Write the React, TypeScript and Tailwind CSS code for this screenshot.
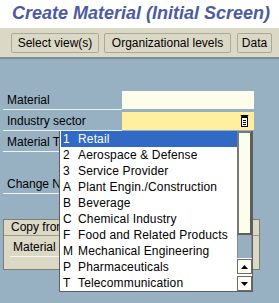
import React from 'react';

type Sector = { code: string; name: string };

const sectors: Sector[] = [
  { code: '1', name: 'Retail' },
  { code: '2', name: 'Aerospace & Defense' },
  { code: '3', name: 'Service Provider' },
  { code: 'A', name: 'Plant Engin./Construction' },
  { code: 'B', name: 'Beverage' },
  { code: 'C', name: 'Chemical Industry' },
  { code: 'F', name: 'Food and Related Products' },
  { code: 'M', name: 'Mechanical Engineering' },
  { code: 'P', name: 'Pharmaceuticals' },
  { code: 'T', name: 'Telecommunication' },
];

function HelpIcon() {
  return (
    <svg width="9" height="12" viewBox="0 0 9 12">
      <path d="M0.5 0h8l-1.5 3h-5z" fill="#000" />
      <rect x="1.5" y="2.5" width="6" height="9" fill="#fff" stroke="#000" />
      <path d="M3 5.5h3M3 7.5h3M3 9.5h3" stroke="#000" />
    </svg>
  );
}

function Arrow({ up }: { up?: boolean }) {
  return (
    <svg width="7" height="4" viewBox="0 0 7 4">
      <path d={up ? 'M0 4h7L3.5 0z' : 'M0 0h7L3.5 4z'} fill="#000" />
    </svg>
  );
}

// labels under the popup get clipped where the list starts
function Label({ text, clip }: { text: string; clip?: boolean }) {
  return (
    <div className="w-[119px] h-[19px] border-b border-[#eef3f6] pl-[4px] leading-[18px] whitespace-nowrap overflow-hidden">
      <span className={clip ? 'block w-[52px] overflow-hidden' : ''}>{text}</span>
    </div>
  );
}

export default function App() {
  return (
    <div className="w-[279px] h-[303px] overflow-hidden bg-[#98b1c2] text-[12px] text-black font-['Liberation_Sans',Arial,sans-serif]">
      {/* title */}
      <div className="h-[28px] bg-white pl-[12px] pt-[3px] text-[18px] leading-[21px] font-bold italic text-[#4c5ba1] whitespace-nowrap">
        Create Material (Initial Screen)
      </div>

      {/* toolbar */}
      <div className="h-[29px] bg-[#dbd8c6] flex items-start gap-[5px] pl-[11px] pt-[5px] whitespace-nowrap">
        <button className="w-[88px] h-[20px] border border-[#aaa898] rounded-[2px] leading-[18px] text-center">Select view(s)</button>
        <button className="w-[127px] h-[20px] border border-[#aaa898] rounded-[2px] leading-[18px] text-center">Organizational levels</button>
        <button className="w-[35px] h-[20px] ml-[1px] border border-[#aaa898] rounded-[2px] leading-[18px] text-center">Data</button>
      </div>
      <div className="h-[2px] bg-[#7a8d9b]" />

      {/* form */}
      <div className="relative pt-[32px]">
        <div className="flex flex-col gap-[2px] ml-[3px]">
          <div className="flex items-start">
            <Label text="Material" />
            <div className="w-[132px] h-[18px] bg-[#fdfdeb]" />
          </div>
          <div className="flex items-start">
            <Label text="Industry sector" />
            <div className="w-[132px] h-[18px] bg-[#ffef9f] flex items-center justify-end pr-[5px]">
              <HelpIcon />
            </div>
          </div>
          <div className="flex items-start">
            <Label text="Material Type" clip />
          </div>
          <div className="h-[19px]" />
          <div className="flex items-start">
            <Label text="Change Number" clip />
          </div>
        </div>

        {/* copy from */}
        <div className="mt-[25px] ml-[3px] w-[257px] h-[51px] bg-[#dbd8c6] border border-[#7e7d72]">
          <div className="h-[16px] border-b border-[#9c9a8b] pl-[7px] leading-[15px] whitespace-nowrap">
            <span className="block w-[48px] overflow-hidden">Copy from</span>
          </div>
          <div className="pt-[2px] pl-[6px]">
            <div className="w-[50px] h-[19px] border-b border-[#f6f5ee] pl-[3px] leading-[18px] overflow-hidden">Material</div>
          </div>
        </div>

        {/* dropdown list */}
        <div className="absolute left-[59px] top-[72px] w-[194px] h-[161px] bg-white border border-t-0 border-[#5f5f5f] flex pl-[1px]">
          <div className="w-[176px] tracking-[0.15px]">
            {sectors.map((s, i) => (
              <div
                key={s.code}
                className={
                  'h-[16px] leading-[16px] flex pl-[2px] whitespace-nowrap ' +
                  (i === 0 ? 'bg-[#316ac5] text-white' : '')
                }
              >
                <span className="w-[15px]">{s.code}</span>
                <span>{s.name}</span>
              </div>
            ))}
          </div>
          <div className="w-[15px] h-[160px] flex flex-col">
            <div className="h-[104px] bg-[#fdfdec] border-2 border-t-[#7a7a7a] border-l-[#7a7a7a] border-b-[#5c5c5c] border-r-[#5c5c5c]" />
            <div className="h-[23px] bg-[#97afc1] border-x border-[#7a8c9a]" />
            <div className="h-[15px] mt-[1px] border border-[#6b6b6b] bg-[#fdfdf3] flex items-center justify-center">
              <Arrow up />
            </div>
            <div className="h-[15px] mt-[2px] border border-[#6b6b6b] bg-[#fdfdf3] flex items-center justify-center">
              <Arrow />
            </div>
          </div>
        </div>
      </div>
    </div>
  );
}
